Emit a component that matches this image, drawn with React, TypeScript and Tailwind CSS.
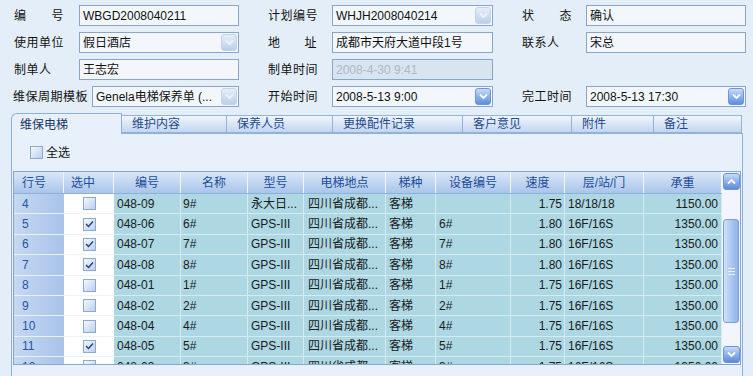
import React from 'react';

const font = { fontFamily: '"Liberation Sans", "Noto Sans CJK SC", sans-serif' };

type DropKind = 'pale' | 'strong' | 'none';

const DropButton = ({ kind }: { kind: DropKind }) => {
    if (kind === 'none') return null;
    const strong = kind === 'strong';
    return (
        <div
            className={
                'ml-auto mr-[1px] w-[16px] h-[17px] rounded-[3px] border flex items-center justify-center ' +
                (strong
                    ? 'border-[#6f93d4] bg-gradient-to-b from-[#c9dcf8] via-[#8fb2ec] to-[#5f8fdc]'
                    : 'border-[#c3d3ea] bg-gradient-to-b from-[#e6eef9] to-[#bccfe9]')
            }
        >
            <svg width="9" height="7" viewBox="0 0 9 7">
                <path d="M1 1.5 L4.5 5 L8 1.5" fill="none" stroke={strong ? '#ffffff' : '#eef3fb'} strokeWidth="1.8" />
            </svg>
        </div>
    );
};

const Field = ({ value, width, drop = 'none', disabled = false }: { value: string; width: number; drop?: DropKind; disabled?: boolean }) => (
    <div
        style={{ width }}
        className={
            'h-[21px] border border-[#8aa6c6] flex items-center pl-[3px] text-[12px] whitespace-nowrap overflow-hidden ' +
            (disabled ? 'bg-[#d9e4f1] text-[#aab8c9]' : 'bg-[#f3f7fc] text-[#111]')
        }
    >
        <span>{value}</span>
        <DropButton kind={drop} />
    </div>
);

const Label = ({ text, width, spread }: { text: string; width: number; spread?: number }) => (
    <div style={{ width }} className="text-[12px] text-[#111] tracking-[0.5px] shrink-0">
        {spread ? (
            <div style={{ width: spread }} className="flex justify-between">
                {text.split('').map((c, i) => (
                    <span key={i}>{c}</span>
                ))}
            </div>
        ) : (
            text
        )}
    </div>
);

const tabs = [
    { name: '维保电梯', w: 111 },
    { name: '维护内容', w: 105 },
    { name: '保养人员', w: 106 },
    { name: '更换配件记录', w: 130 },
    { name: '客户意见', w: 109 },
    { name: '附件', w: 82 },
    { name: '备注', w: 88 },
];

const cols = [
    { name: '行号', w: 50, head: 'left', pad: 8 },
    { name: '选中', w: 50, head: 'left', pad: 7 },
    { name: '编号', w: 67, head: 'center', pad: 3, align: 'left' },
    { name: '名称', w: 67, head: 'center', pad: 2, align: 'left' },
    { name: '型号', w: 56, head: 'center', pad: 3, align: 'left' },
    { name: '电梯地点', w: 82, head: 'center', pad: 4, align: 'left' },
    { name: '梯种', w: 50, head: 'center', pad: 3, align: 'left' },
    { name: '设备编号', w: 75, head: 'center', pad: 3, align: 'left' },
    { name: '速度', w: 54, head: 'center', pad: 2, align: 'right' },
    { name: '层/站/门', w: 79, head: 'center', pad: 3, align: 'left' },
    { name: '承重', w: 78, head: 'center', pad: 3, align: 'right' },
];

const rows: { n: number; on: boolean; cells: string[] }[] = [
    { n: 4, on: false, cells: ['048-09', '9#', '永大日...', '四川省成都...', '客梯', '', '1.75', '18/18/18', '1150.00'] },
    { n: 5, on: true, cells: ['048-06', '6#', 'GPS-III', '四川省成都...', '客梯', '6#', '1.80', '16F/16S', '1350.00'] },
    { n: 6, on: true, cells: ['048-07', '7#', 'GPS-III', '四川省成都...', '客梯', '7#', '1.80', '16F/16S', '1350.00'] },
    { n: 7, on: true, cells: ['048-08', '8#', 'GPS-III', '四川省成都...', '客梯', '8#', '1.80', '16F/16S', '1350.00'] },
    { n: 8, on: false, cells: ['048-01', '1#', 'GPS-III', '四川省成都...', '客梯', '1#', '1.75', '16F/16S', '1350.00'] },
    { n: 9, on: false, cells: ['048-02', '2#', 'GPS-III', '四川省成都...', '客梯', '2#', '1.75', '16F/16S', '1350.00'] },
    { n: 10, on: false, cells: ['048-04', '4#', 'GPS-III', '四川省成都...', '客梯', '4#', '1.75', '16F/16S', '1350.00'] },
    { n: 11, on: true, cells: ['048-05', '5#', 'GPS-III', '四川省成都...', '客梯', '5#', '1.75', '16F/16S', '1350.00'] },
    { n: 12, on: false, cells: ['048-03', '3#', 'GPS-III', '四川省成都...', '客梯', '3#', '1.75', '16F/16S', '1350.00'] },
];

const CheckBox = ({ on }: { on: boolean }) => (
    <div className="w-[13px] h-[13px] border border-[#8ea9cf] bg-gradient-to-br from-[#f4f8fd] to-[#bccfec] flex items-center justify-center">
        {on && (
            <svg width="9" height="8" viewBox="0 0 9 8">
                <path d="M1 4 L3.5 6.5 L8 1.5" fill="none" stroke="#21448c" strokeWidth="1.5" />
            </svg>
        )}
    </div>
);

const ScrollBtn = ({ up }: { up: boolean }) => (
    <div className="w-[17px] h-[17px] rounded-[3px] border border-[#6e93d3] bg-gradient-to-b from-[#c6dbf8] via-[#8eb1ec] to-[#5b8bdb] flex items-center justify-center">
        <svg width="9" height="7" viewBox="0 0 9 7">
            <path d={up ? 'M1 5.5 L4.5 2 L8 5.5' : 'M1 1.5 L4.5 5 L8 1.5'} fill="none" stroke="#ffffff" strokeWidth="1.8" />
        </svg>
    </div>
);

export default function App() {
    return (
        <div style={font} className="w-[753px] h-[376px] overflow-hidden bg-[#e4eef9] pt-[5px]">
            {/* header form */}
            <div className="flex flex-col gap-[6px]">
                <div className="flex items-center pl-[14px]">
                    <Label text="编号" width={65} spread={50} />
                    <Field value="WBGD2008040211" width={160} />
                    <div className="w-[29px]" />
                    <Label text="计划编号" width={64} />
                    <Field value="WHJH2008040214" width={161} drop="pale" />
                    <div className="w-[29px]" />
                    <Label text="状态" width={64} spread={50} />
                    <Field value="确认" width={160} />
                </div>
                <div className="flex items-center pl-[14px]">
                    <Label text="使用单位" width={65} />
                    <Field value="假日酒店" width={160} drop="pale" />
                    <div className="w-[29px]" />
                    <Label text="地址" width={64} spread={49} />
                    <Field value="成都市天府大道中段1号" width={161} />
                    <div className="w-[29px]" />
                    <Label text="联系人" width={64} />
                    <Field value="宋总" width={160} />
                </div>
                <div className="flex items-center pl-[14px]">
                    <Label text="制单人" width={65} />
                    <Field value="王志宏" width={160} />
                    <div className="w-[29px]" />
                    <Label text="制单时间" width={64} />
                    <Field value="2008-4-30 9:41" width={161} disabled />
                </div>
                <div className="flex items-center pl-[13px]">
                    <Label text="维保周期模板" width={79} />
                    <Field value="Genela电梯保养单 (..." width={147} drop="pale" />
                    <div className="w-[29px]" />
                    <Label text="开始时间" width={64} />
                    <Field value="2008-5-13 9:00" width={161} drop="strong" />
                    <div className="w-[29px]" />
                    <Label text="完工时间" width={64} />
                    <Field value="2008-5-13 17:30" width={160} drop="strong" />
                </div>
            </div>

            {/* tabs */}
            <div className="mt-[6px] ml-[11px] flex items-end h-[20px]">
                {tabs.map((t, i) =>
                    i === 0 ? (
                        <div
                            key={t.name}
                            style={{ width: t.w }}
                            className="h-[21px] -mb-[1px] rounded-tl-[6px] border border-b-0 border-[#8fb1d6] bg-[#e8f1fb] pl-[8px] pt-[2px] text-[12px] text-[#16365f] relative z-10"
                        >
                            {t.name}
                        </div>
                    ) : (
                        <div
                            key={t.name}
                            style={{ width: t.w }}
                            className="h-[18px] border border-l-0 border-[#93b3d8] bg-gradient-to-b from-[#f1f6fd] to-[#c2d6ef] pl-[10px] text-[12px] leading-[16px] text-[#23498f]"
                        >
                            {t.name}
                        </div>
                    )
                )}
            </div>

            {/* panel */}
            <div className="ml-[11px] w-[732px] h-[260px] border border-[#8fb1d6] bg-[#e8f1fb] pl-[1px]">
                <div className="h-[37px] flex items-center pl-[17px] gap-[3px] text-[12px] text-[#111]">
                    <CheckBox on={false} />
                    <span>全选</span>
                </div>
                <div className="w-[728px] h-[194px] border border-[#86a7cd] bg-[#f1f5fb] flex overflow-hidden">
                    <div className="w-[708px] flex flex-col">
                        <div className="h-[22px] flex shrink-0 bg-gradient-to-b from-[#dae7f8] to-[#a9c5ea] border-b border-[#8fb0d8]">
                            {cols.map((c) => (
                                <div
                                    key={c.name}
                                    style={{ width: c.w, paddingLeft: c.head === 'left' ? c.pad : 0 }}
                                    className={
                                        'h-full flex items-center text-[12px] text-[#1d4c9c] border-r border-[#f3f7fd] ' +
                                        (c.head === 'center' ? 'justify-center' : '')
                                    }
                                >
                                    {c.name}
                                </div>
                            ))}
                        </div>
                        {rows.map((r) => (
                            <div key={r.n} className="h-[20.4px] flex shrink-0 text-[12px]">
                                <div className="w-[50px] h-full pl-[8px] flex items-center text-[#2555a5] bg-gradient-to-r from-[#c6d8f1] to-[#a8c3ea] border-b border-[#e9f1fb]">
                                    {r.n}
                                </div>
                                <div className="w-[50px] h-full flex items-center justify-center bg-white border-b border-[#eef3f8]">
                                    <CheckBox on={r.on} />
                                </div>
                                {r.cells.map((v, i) => {
                                    const c = cols[i + 2];
                                    return (
                                        <div
                                            key={i}
                                            style={{ width: c.w, paddingLeft: c.align === 'left' ? c.pad : 0, paddingRight: c.align === 'right' ? c.pad : 0 }}
                                            className={
                                                'h-full flex items-center whitespace-nowrap overflow-hidden bg-[#acd7e3] text-[#1a1a1a] border-r border-b border-[#d3ebf1] ' +
                                                (c.align === 'right' ? 'justify-end' : '')
                                            }
                                        >
                                            {v}
                                        </div>
                                    );
                                })}
                            </div>
                        ))}
                    </div>
                    <div className="w-[18px] flex flex-col items-center bg-[#f2f5fb] pt-[1px]">
                        <ScrollBtn up />
                        <div className="mt-[29px] w-[16px] h-[104px] rounded-[3px] border border-[#7c9fd8] bg-gradient-to-r from-[#cfe0f8] to-[#8eb2ea] flex flex-col items-center justify-center gap-[2px]">
                            <div className="w-[7px] h-[1px] bg-[#e8f0fc]" />
                            <div className="w-[7px] h-[1px] bg-[#e8f0fc]" />
                            <div className="w-[7px] h-[1px] bg-[#e8f0fc]" />
                        </div>
                        <div className="mt-auto mb-[1px]">
                            <ScrollBtn up={false} />
                        </div>
                    </div>
                </div>
            </div>
        </div>
    );
}
